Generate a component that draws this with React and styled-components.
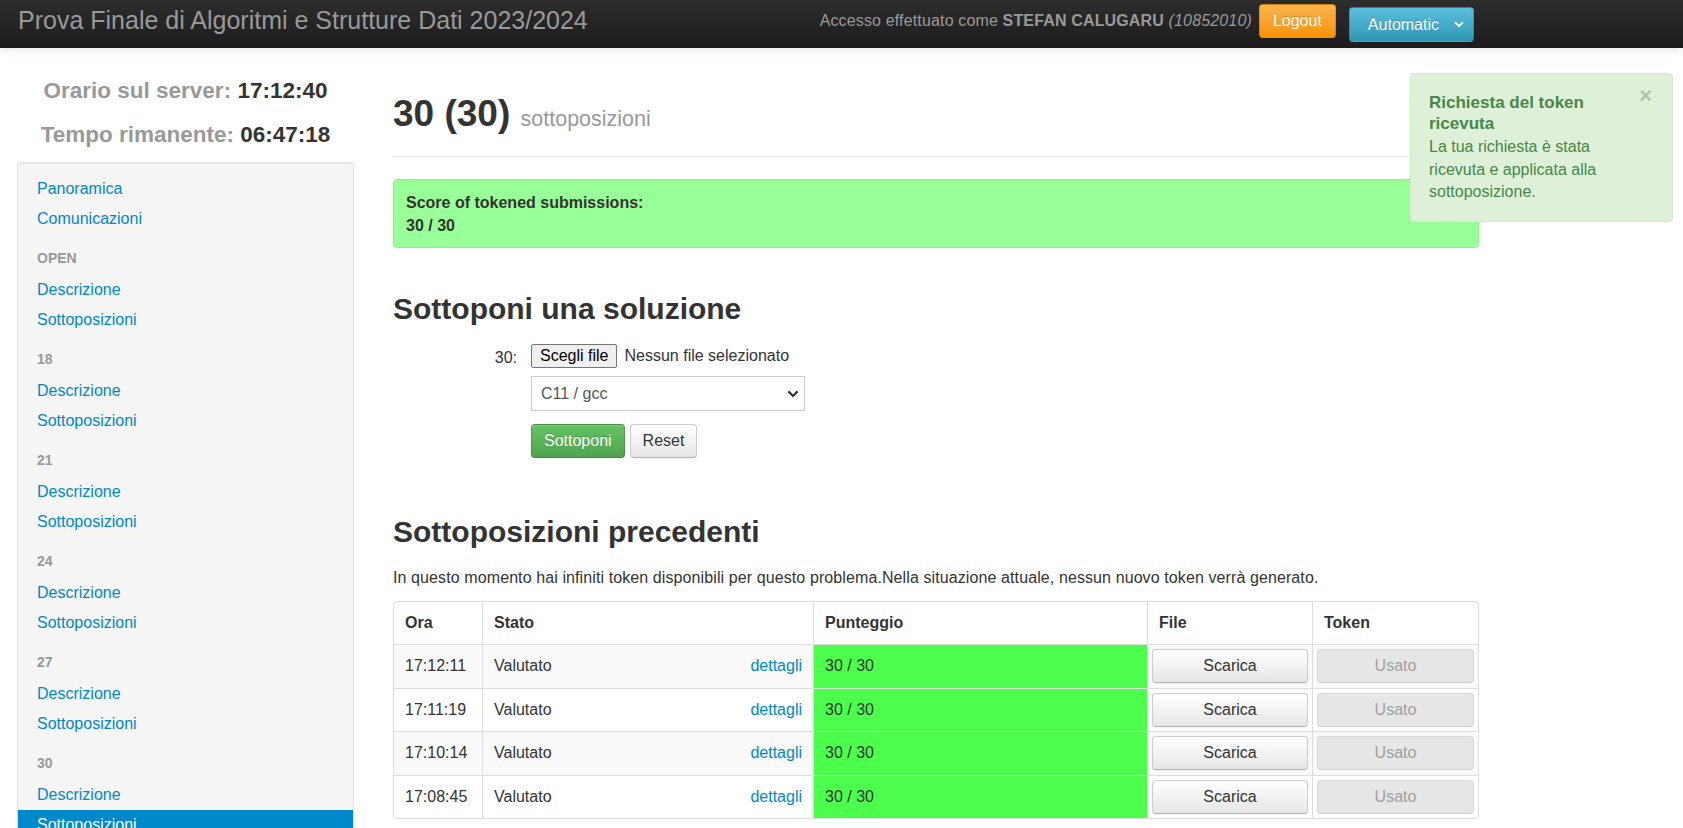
import React from 'react';
import styled, { createGlobalStyle } from 'styled-components';

const GlobalStyle = createGlobalStyle`
  * { box-sizing: border-box; }
  html, body {
    margin: 0;
    padding: 0;
    overflow: hidden;
    background: #fff;
  }
  body {
    font-family: "Liberation Sans", Arial, sans-serif;
    font-size: 16px;
    color: #333;
  }
`;

/* barra superiore */
const Navbar = styled.header`
  position: relative;
  z-index: 2;
  height: 48px;
  display: flex;
  align-items: flex-start;
  justify-content: space-between;
  padding: 0 209px 0 18px;
  background: linear-gradient(#2d2d2d, #1c1c1c);
  box-shadow: 0 1px 10px rgba(0, 0, 0, 0.12);
`;

const Brand = styled.div`
  font-size: 25px;
  line-height: 40px;
  color: #999;
  white-space: nowrap;
`;

const UserArea = styled.div`
  display: flex;
  align-items: flex-start;
`;

const LoginInfo = styled.span`
  color: #999;
  line-height: 42px;
  margin-right: 7px;
  letter-spacing: 0.15px;
  white-space: nowrap;

  b { font-weight: bold; }
  i { font-style: italic; }
`;

const NavButton = styled.button`
  display: flex;
  align-items: center;
  height: ${(p) => (p.$info ? '35px' : '34px')};
  margin-top: ${(p) => (p.$info ? '7px' : '4px')};
  margin-left: ${(p) => (p.$info ? '13px' : '0')};
  padding: ${(p) => (p.$info ? '0 9px 0 18px' : '0 13px')};
  border: 1px solid rgba(0, 0, 0, 0.15);
  border-radius: 4px;
  font-family: inherit;
  font-size: 16px;
  color: #fff;
  text-shadow: 0 -1px 0 rgba(0, 0, 0, 0.2);
  background: ${(p) =>
    p.$info
      ? 'linear-gradient(#5bc0de, #2f96b4)'
      : 'linear-gradient(#fbb450, #f89406)'};

  svg { margin-left: 15px; }
`;

/* layout pagina */
const Page = styled.div`
  display: grid;
  grid-template-columns: 337px 1086px;
  column-gap: 39px;
  padding-left: 17px;
  align-items: start;
`;

const Sidebar = styled.aside`
  padding-top: 21px;
`;

const Timer = styled.div`
  text-align: center;
  font-size: 22.5px;
  font-weight: bold;
  line-height: 43.5px;
  color: #999;
  white-space: nowrap;

  span { color: #333; }
`;

const SideNav = styled.nav`
  margin-top: 6px;
  padding: 11px 0;
  background: #f5f5f5;
  border: 1px solid #e3e3e3;
  border-radius: 4px;
  box-shadow: inset 0 1px 1px rgba(0, 0, 0, 0.05);
`;

const NavLink = styled.a`
  display: block;
  height: 30px;
  line-height: 30px;
  padding-left: 19px;
  font-size: 16px;
  text-decoration: none;
  color: ${(p) => (p.$active ? '#fff' : '#0088cc')};
  background: ${(p) => (p.$active ? '#0088cc' : 'transparent')};
`;

const NavHeader = styled.div`
  padding: 16px 0 9px 19px;
  line-height: 16px;
  font-size: 14px;
  font-weight: bold;
  color: #999;
  text-transform: uppercase;
`;

const Main = styled.main`
  padding-top: 46px;
`;

const PageHeader = styled.div`
  padding-bottom: 17px;
  border-bottom: 1px solid #eee;

  h1 {
    margin: 0;
    font-size: 37px;
    line-height: 40px;
    font-weight: bold;
    color: #333;
  }

  small {
    font-size: 21.5px;
    font-weight: normal;
    color: #999;
  }
`;

const ScoreAlert = styled.div`
  margin-top: 22px;
  padding: 11px 12px 10px;
  background: #99ff99;
  border: 1px solid #8ef08e;
  border-radius: 4px;
  font-weight: bold;
  line-height: 23px;
  color: #333;
`;

const SectionTitle = styled.h2`
  margin: ${(p) => p.$top}px 0 0;
  font-size: 30px;
  line-height: 36px;
  font-weight: bold;
  color: #333;
`;

const SubmitForm = styled.form`
  margin-top: 17px;
  display: grid;
  grid-template-columns: 124px auto;
  column-gap: 14px;
  align-items: start;
`;

const FieldLabel = styled.label`
  text-align: right;
  line-height: 28px;
  color: #333;
`;

const Controls = styled.div`
  display: flex;
  flex-direction: column;
  align-items: flex-start;
`;

const FileRow = styled.div`
  display: flex;
  align-items: center;
  gap: 7px;
  height: 24px;
`;

const FileButton = styled.button`
  height: 24px;
  padding: 0 8px;
  border: 1px solid #767676;
  border-radius: 2px;
  background: #efefef;
  font-family: inherit;
  font-size: 16px;
  color: #000;
`;

const SelectBox = styled.div`
  position: relative;
  margin-top: 8px;
  width: 274px;
  height: 35px;
  border: 1px solid #ccc;
  background: #fff;
  color: #333;

  select {
    appearance: none;
    width: 100%;
    height: 100%;
    border: 0;
    padding-left: 9px;
    background: transparent;
    font-family: inherit;
    font-size: 16px;
    color: #555;
  }

  svg {
    position: absolute;
    right: 5px;
    top: 13px;
    pointer-events: none;
  }
`;

const ButtonRow = styled.div`
  display: flex;
  gap: 5px;
  margin-top: 13px;
`;

const Btn = styled.button`
  height: 34px;
  padding: 0 12px;
  border-radius: 4px;
  font-family: inherit;
  font-size: 16px;
  border: 1px solid ${(p) => (p.$primary ? 'rgba(0,0,0,0.15)' : '#ccc')};
  border-bottom-color: ${(p) => (p.$primary ? 'rgba(0,0,0,0.3)' : '#b3b3b3')};
  color: ${(p) => (p.$primary ? '#fff' : '#333')};
  text-shadow: ${(p) =>
    p.$primary ? '0 -1px 0 rgba(0,0,0,0.25)' : '0 1px 1px rgba(255,255,255,0.75)'};
  background: ${(p) =>
    p.$primary ? 'linear-gradient(#62c462, #51a351)' : 'linear-gradient(#fff, #e6e6e6)'};
  box-shadow: inset 0 1px 0 rgba(255, 255, 255, 0.2), 0 1px 2px rgba(0, 0, 0, 0.05);
`;

const InfoText = styled.p`
  margin: 17px 0 12px;
  line-height: 22px;
  letter-spacing: 0.1px;
  color: #333;
`;

const Table = styled.table`
  width: 1086px;
  table-layout: fixed;
  border-collapse: separate;
  border-spacing: 0;
  border: 1px solid #ddd;
  border-radius: 4px;

  th, td {
    text-align: left;
    padding: 10px 11px;
    line-height: 22.5px;
    vertical-align: middle;
    border-left: 1px solid #ddd;
  }
  th {
    font-weight: bold;
    line-height: 22px;
  }
  th:first-child, td:first-child { border-left: 0; }
  td { border-top: 1px solid #ddd; }
  tbody tr:nth-child(odd) td { background: #f9f9f9; }
  tbody tr td.score { background: #4cff4c; }
  td.action { padding: 4px; }
`;

const DetailLink = styled.a`
  float: right;
  color: #0088cc;
  text-decoration: none;
`;

const CellButton = styled.button`
  width: 100%;
  height: 34px;
  border-radius: 4px;
  font-family: inherit;
  font-size: 16px;
  border: 1px solid ${(p) => (p.disabled ? '#d9d9d9' : '#ccc')};
  border-bottom-color: ${(p) => (p.disabled ? '#d0d0d0' : '#b3b3b3')};
  color: ${(p) => (p.disabled ? '#a0a0a0' : '#333')};
  background: ${(p) => (p.disabled ? '#e6e6e6' : 'linear-gradient(#fff, #e6e6e6)')};
  box-shadow: ${(p) => (p.disabled ? 'none' : '0 1px 2px rgba(0,0,0,0.05)')};
`;

/* notifica in alto a destra */
const Toast = styled.div`
  position: absolute;
  top: 73px;
  left: 1410px;
  width: 263px;
  padding: 18px 44px 17px 18px;
  background: #dff0d8;
  border: 1px solid #d6e9c6;
  border-radius: 4px;
  color: #468847;
  z-index: 5;

  h4 {
    margin: 0;
    font-size: 17px;
    line-height: 21px;
    font-weight: bold;
  }
  p {
    margin: 2px 0 0;
    font-size: 16px;
    line-height: 22.5px;
  }
`;

const CloseX = styled.span`
  position: absolute;
  top: 11px;
  right: 20px;
  font-size: 22px;
  font-weight: bold;
  line-height: 22px;
  color: #000;
  opacity: 0.2;
`;

const Chevron = ({ w = 10, h = 7 }) => (
  <svg width={w} height={h} viewBox="0 0 10 7">
    <path d="M1 1.2 L5 5.2 L9 1.2" fill="none" stroke="currentColor" strokeWidth="1.9" />
  </svg>
);

const groups = ['OPEN', '18', '21', '24', '27', '30'];
const rows = ['17:12:11', '17:11:19', '17:10:14', '17:08:45'];

export default function App() {
  return (
    <>
      <GlobalStyle />
      <Navbar>
        <Brand>Prova Finale di Algoritmi e Strutture Dati 2023/2024</Brand>
        <UserArea>
          <LoginInfo>
            Accesso effettuato come <b>STEFAN CALUGARU</b> <i>(10852010)</i>
          </LoginInfo>
          <NavButton>Logout</NavButton>
          <NavButton $info>
            Automatic
            <Chevron />
          </NavButton>
        </UserArea>
      </Navbar>

      <Page>
        <Sidebar>
          <Timer>
            Orario sul server: <span>17:12:40</span>
          </Timer>
          <Timer>
            Tempo rimanente: <span>06:47:18</span>
          </Timer>
          <SideNav>
            <NavLink href="#">Panoramica</NavLink>
            <NavLink href="#">Comunicazioni</NavLink>
            {groups.map((g) => (
              <React.Fragment key={g}>
                <NavHeader>{g}</NavHeader>
                <NavLink href="#">Descrizione</NavLink>
                <NavLink href="#" $active={g === '30'}>
                  Sottoposizioni
                </NavLink>
              </React.Fragment>
            ))}
          </SideNav>
        </Sidebar>

        <Main>
          <PageHeader>
            <h1>
              30 (30) <small>sottoposizioni</small>
            </h1>
          </PageHeader>

          <ScoreAlert>
            Score of tokened submissions:
            <br />
            30 / 30
          </ScoreAlert>

          <SectionTitle $top={43}>Sottoponi una soluzione</SectionTitle>
          <SubmitForm onSubmit={(e) => e.preventDefault()}>
            <FieldLabel>30:</FieldLabel>
            <Controls>
              <FileRow>
                <FileButton type="button">Scegli file</FileButton>
                <span>Nessun file selezionato</span>
              </FileRow>
              <SelectBox>
                <select defaultValue="c11">
                  <option value="c11">C11 / gcc</option>
                </select>
                <Chevron w={12} h={8} />
              </SelectBox>
              <ButtonRow>
                <Btn $primary type="submit">Sottoponi</Btn>
                <Btn type="reset">Reset</Btn>
              </ButtonRow>
            </Controls>
          </SubmitForm>

          <SectionTitle $top={56}>Sottoposizioni precedenti</SectionTitle>
          <InfoText>
            In questo momento hai infiniti token disponibili per questo problema.Nella situazione
            attuale, nessun nuovo token verrà generato.
          </InfoText>

          <Table>
            <colgroup>
              <col style={{ width: 88 }} />
              <col style={{ width: 331 }} />
              <col style={{ width: 334 }} />
              <col style={{ width: 165 }} />
              <col style={{ width: 166 }} />
            </colgroup>
            <thead>
              <tr>
                <th>Ora</th>
                <th>Stato</th>
                <th>Punteggio</th>
                <th>File</th>
                <th>Token</th>
              </tr>
            </thead>
            <tbody>
              {rows.map((t) => (
                <tr key={t}>
                  <td>{t}</td>
                  <td>
                    Valutato
                    <DetailLink href="#">dettagli</DetailLink>
                  </td>
                  <td className="score">30 / 30</td>
                  <td className="action">
                    <CellButton>Scarica</CellButton>
                  </td>
                  <td className="action">
                    <CellButton disabled>Usato</CellButton>
                  </td>
                </tr>
              ))}
            </tbody>
          </Table>
        </Main>
      </Page>

      <Toast>
        <CloseX>×</CloseX>
        <h4>Richiesta del token ricevuta</h4>
        <p>La tua richiesta è stata ricevuta e applicata alla sottoposizione.</p>
      </Toast>
    </>
  );
}
